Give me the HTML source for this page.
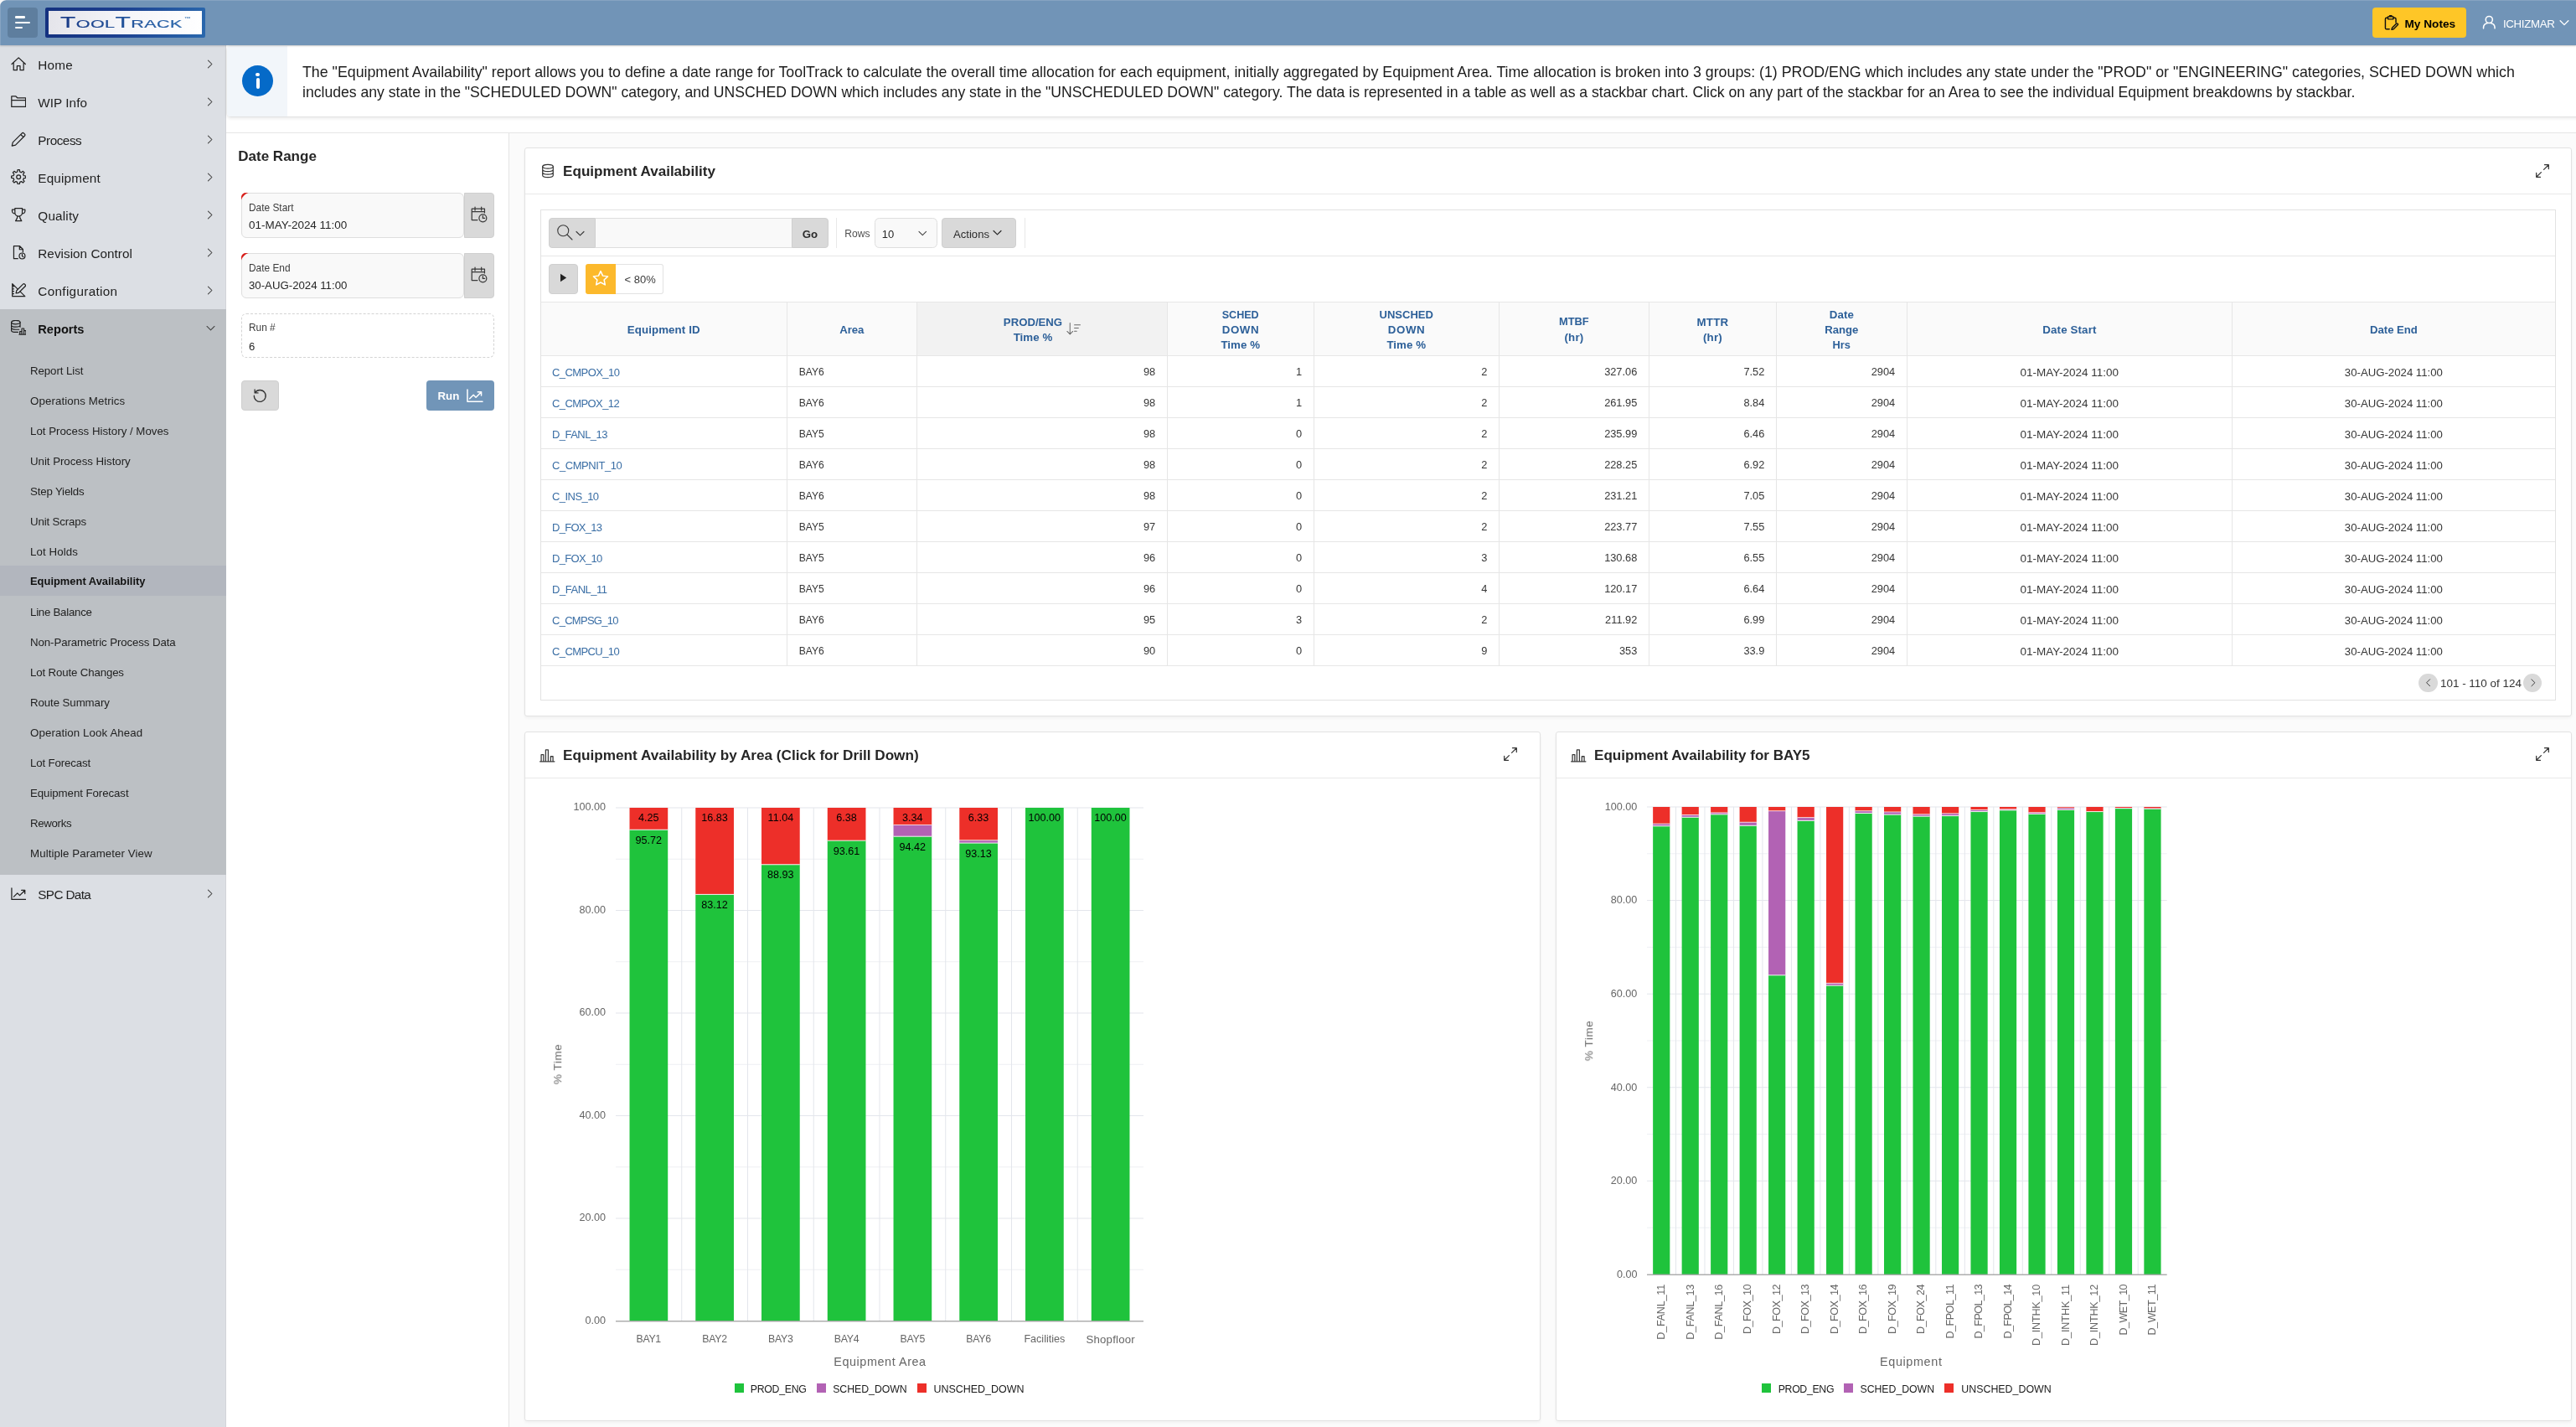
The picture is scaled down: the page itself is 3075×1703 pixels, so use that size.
<!DOCTYPE html>
<html lang="en"><head><meta charset="utf-8">
<title>Equipment Availability - ToolTrack</title>
<style>
html,body{margin:0;padding:0;}
body{width:3075px;height:1703px;overflow:hidden;position:relative;background:#fbfbfb;
 font-family:"Liberation Sans",sans-serif;-webkit-font-smoothing:antialiased;}
#w{position:absolute;left:0;top:0;width:3075px;height:1703px;overflow:hidden;will-change:transform;opacity:.9999;}
.b{position:absolute;display:block;}
.t{position:absolute;white-space:nowrap;line-height:1;display:block;}
.logo{font-size:12.6px;line-height:22px;height:22px;letter-spacing:.25px;transform:scaleX(1.71);transform-origin:0 50%;
 background:linear-gradient(90deg,#1a3a86,#2a69ad);-webkit-background-clip:text;background-clip:text;color:transparent;-webkit-text-stroke:.12px rgba(32,78,152,.8);}
.logo .L{font-size:17.5px;}
.logo .tm{font-size:6px;position:relative;top:-6.5px;letter-spacing:0;}
</style></head>
<body>
<div id="w">
<div class="b" style="left:0px;top:54px;width:270px;height:1649px;background:#dcdfe4;border-right:1px solid #d2d4d8;box-sizing:border-box;"></div>
<svg class="b" style="left:13.1px;top:66.5px;" width="18.4" height="18.4" viewBox="0 0 16 16"><g fill="none" stroke="#222" stroke-width="1.08" stroke-linecap="round" stroke-linejoin="round"><path d="M.9 8.3 8 1.6l7.1 6.7M2.8 6.9v7.6h3.6v-4.3h3.2v4.3h3.6V6.9"/></g></svg>
<span class="t" style="left:45.3px;top:70.03px;font-size:15.3px;color:#1f1f1f;letter-spacing:0.2px;">Home</span>
<svg class="b" style="left:244px;top:69.5px;" width="13" height="13" viewBox="0 0 16 16"><g fill="none" stroke="#444" stroke-width="1.3" stroke-linecap="round" stroke-linejoin="round"><path d="M5.500 2.500 11 8l-5.500 5.500"/></g></svg>
<svg class="b" style="left:13.1px;top:111.5px;" width="18.4" height="18.4" viewBox="0 0 16 16"><g fill="none" stroke="#222" stroke-width="1.08" stroke-linecap="round" stroke-linejoin="round"><path d="M.7 13.4V2.6h4.5l1.7 1.7h8.4v9.1zM.7 6.6h14.6"/></g></svg>
<span class="t" style="left:45.3px;top:115.03px;font-size:15.3px;color:#1f1f1f;letter-spacing:0.04px;">WIP Info</span>
<svg class="b" style="left:244px;top:114.5px;" width="13" height="13" viewBox="0 0 16 16"><g fill="none" stroke="#444" stroke-width="1.3" stroke-linecap="round" stroke-linejoin="round"><path d="M5.500 2.500 11 8l-5.500 5.500"/></g></svg>
<svg class="b" style="left:13.1px;top:156.5px;" width="18.4" height="18.4" viewBox="0 0 16 16"><g fill="none" stroke="#222" stroke-width="1.08" stroke-linecap="round" stroke-linejoin="round"><path d="M1.1 14.9l.9-3.7L11.4 1.8a1.5 1.5 0 0 1 2.1 0l.7.7a1.5 1.5 0 0 1 0 2.1L4.8 14zM10.2 3l2.8 2.8"/></g></svg>
<span class="t" style="left:45.3px;top:160.03px;font-size:15.3px;color:#1f1f1f;letter-spacing:-0.47px;">Process</span>
<svg class="b" style="left:244px;top:159.5px;" width="13" height="13" viewBox="0 0 16 16"><g fill="none" stroke="#444" stroke-width="1.3" stroke-linecap="round" stroke-linejoin="round"><path d="M5.500 2.500 11 8l-5.500 5.500"/></g></svg>
<svg class="b" style="left:13.1px;top:201.5px;" width="18.4" height="18.4" viewBox="0 0 16 16"><g fill="none" stroke="#222" stroke-width="1.08" stroke-linecap="round" stroke-linejoin="round"><path d="M6.72 2.65 L7.00 0.57 L9.00 0.57 L9.28 2.65 L10.87 3.31 L12.55 2.04 L13.96 3.45 L12.69 5.13 L13.35 6.72 L15.43 7.00 L15.43 9.00 L13.35 9.28 L12.69 10.87 L13.96 12.55 L12.55 13.96 L10.87 12.69 L9.28 13.35 L9.00 15.43 L7.00 15.43 L6.72 13.35 L5.13 12.69 L3.45 13.96 L2.04 12.55 L3.31 10.87 L2.65 9.28 L0.57 9.00 L0.57 7.00 L2.65 6.72 L3.31 5.13 L2.04 3.45 L3.45 2.04 L5.13 3.31Z"/><circle cx="8" cy="8" r="2.1"/></g></svg>
<span class="t" style="left:45.3px;top:205.03px;font-size:15.3px;color:#1f1f1f;letter-spacing:0.17px;">Equipment</span>
<svg class="b" style="left:244px;top:204.5px;" width="13" height="13" viewBox="0 0 16 16"><g fill="none" stroke="#444" stroke-width="1.3" stroke-linecap="round" stroke-linejoin="round"><path d="M5.500 2.500 11 8l-5.500 5.500"/></g></svg>
<svg class="b" style="left:13.1px;top:246.5px;" width="18.4" height="18.4" viewBox="0 0 16 16"><g fill="none" stroke="#222" stroke-width="1.08" stroke-linecap="round" stroke-linejoin="round"><path d="M4.2 1.5h7.6v4.3a3.8 3.8 0 0 1-7.6 0zM4.2 2.8H1.3v1.4a2.7 2.7 0 0 0 2.9 2.7M11.8 2.8h2.9v1.4a2.7 2.7 0 0 1-2.9 2.7M6.9 9.4c0 2.2-.9 3.6-2 5.1h6.2c-1.1-1.5-2-2.900-2-5.1"/></g></svg>
<span class="t" style="left:45.3px;top:250.03px;font-size:15.3px;color:#1f1f1f;letter-spacing:0.18px;">Quality</span>
<svg class="b" style="left:244px;top:249.5px;" width="13" height="13" viewBox="0 0 16 16"><g fill="none" stroke="#444" stroke-width="1.3" stroke-linecap="round" stroke-linejoin="round"><path d="M5.500 2.500 11 8l-5.500 5.500"/></g></svg>
<svg class="b" style="left:13.1px;top:291.5px;" width="18.4" height="18.4" viewBox="0 0 16 16"><g fill="none" stroke="#222" stroke-width="1.08" stroke-linecap="round" stroke-linejoin="round"><path d="M7.2 14.5H3V1.500h6.200l3.300 3.300v2.900M9 1.700v3.300h3.300"/><circle cx="11.700" cy="11.700" r="3"/><path d="M11.700 10v1.800l1.200.9"/></g></svg>
<span class="t" style="left:45.3px;top:295.03px;font-size:15.3px;color:#1f1f1f;letter-spacing:0.02px;">Revision Control</span>
<svg class="b" style="left:244px;top:294.5px;" width="13" height="13" viewBox="0 0 16 16"><g fill="none" stroke="#444" stroke-width="1.3" stroke-linecap="round" stroke-linejoin="round"><path d="M5.500 2.500 11 8l-5.500 5.500"/></g></svg>
<svg class="b" style="left:13.1px;top:336.5px;" width="18.4" height="18.4" viewBox="0 0 16 16"><g fill="none" stroke="#222" stroke-width="1.08" stroke-linecap="round" stroke-linejoin="round"><path d="M1.500 1.400v13.100h13.100zM1.500 4.300h1.500M1.500 6.800h1.500M1.500 9.300h1.500M1.500 11.800h1.500"/><path fill="#dcdfe4" d="M5.300 11.200l.7-2.700 6.600-6.600a1.300 1.300 0 0 1 1.800 0l.4.400a1.300 1.300 0 0 1 0 1.800L8.200 10.700z"/></g></svg>
<span class="t" style="left:45.3px;top:340.03px;font-size:15.3px;color:#1f1f1f;letter-spacing:0.32px;">Configuration</span>
<svg class="b" style="left:244px;top:339.5px;" width="13" height="13" viewBox="0 0 16 16"><g fill="none" stroke="#444" stroke-width="1.3" stroke-linecap="round" stroke-linejoin="round"><path d="M5.500 2.500 11 8l-5.500 5.500"/></g></svg>
<div class="b" style="left:0px;top:369px;width:270px;height:675px;background:#bcc0c4;"></div>
<svg class="b" style="left:13.3px;top:381.9px;" width="18.2" height="18.2" viewBox="0 0 16 16"><g fill="none" stroke="#222" stroke-width="1.08" stroke-linecap="round" stroke-linejoin="round"><ellipse cx="5.1" cy="2.3" rx="4.6" ry="1.9"/><path d="M.5 2.3v8.5c0 1.050 2.050 1.900 4.600 1.900h2.300M9.700 2.300v4.900M.5 5.200c0 1.050 2.050 1.900 4.600 1.900s4.600-.85 4.600-1.900M.5 8c0 1.050 2.050 1.900 4.600 1.900h3.400M8.700 15h7M9.400 15v-3h2.100M11.500 15V8.800h2.200V15M13.700 15v-3.900h2.100V15"/></g></svg>
<span class="t" style="left:45.3px;top:385.56px;font-size:14.61px;color:#111;font-weight:700;">Reports</span>
<svg class="b" style="left:245px;top:385px;" width="13" height="13" viewBox="0 0 16 16"><g fill="none" stroke="#444" stroke-width="1.3" stroke-linecap="round" stroke-linejoin="round"><path d="M2.500 5.500 8 11l5.500-5.500"/></g></svg>
<span class="t" style="left:36px;top:435.8px;font-size:13.3px;color:#1f1f1f;letter-spacing:-0.09px;">Report List</span>
<span class="t" style="left:36px;top:471.8px;font-size:13.3px;color:#1f1f1f;letter-spacing:0.09px;">Operations Metrics</span>
<span class="t" style="left:36px;top:507.8px;font-size:13.3px;color:#1f1f1f;letter-spacing:-0px;">Lot Process History / Moves</span>
<span class="t" style="left:36px;top:543.8px;font-size:13.3px;color:#1f1f1f;letter-spacing:-0.04px;">Unit Process History</span>
<span class="t" style="left:36px;top:579.8px;font-size:13.3px;color:#1f1f1f;letter-spacing:-0.18px;">Step Yields</span>
<span class="t" style="left:36px;top:615.8px;font-size:13.3px;color:#1f1f1f;letter-spacing:-0.15px;">Unit Scraps</span>
<span class="t" style="left:36px;top:651.8px;font-size:13.3px;color:#1f1f1f;letter-spacing:0.09px;">Lot Holds</span>
<div class="b" style="left:0px;top:674.9px;width:270px;height:36px;background:#b2b6be;"></div>
<span class="t" style="left:36px;top:687.99px;font-size:12.91px;color:#111;font-weight:700;">Equipment Availability</span>
<span class="t" style="left:36px;top:723.8px;font-size:13.3px;color:#1f1f1f;letter-spacing:-0.27px;">Line Balance</span>
<span class="t" style="left:36px;top:759.8px;font-size:13.3px;color:#1f1f1f;letter-spacing:-0.11px;">Non-Parametric Process Data</span>
<span class="t" style="left:36px;top:795.8px;font-size:13.3px;color:#1f1f1f;letter-spacing:-0.16px;">Lot Route Changes</span>
<span class="t" style="left:36px;top:831.8px;font-size:13.3px;color:#1f1f1f;letter-spacing:-0.1px;">Route Summary</span>
<span class="t" style="left:36px;top:867.8px;font-size:13.3px;color:#1f1f1f;letter-spacing:0.1px;">Operation Look Ahead</span>
<span class="t" style="left:36px;top:903.8px;font-size:13.3px;color:#1f1f1f;letter-spacing:-0.16px;">Lot Forecast</span>
<span class="t" style="left:36px;top:939.8px;font-size:13.3px;color:#1f1f1f;letter-spacing:-0.08px;">Equipment Forecast</span>
<span class="t" style="left:36px;top:975.8px;font-size:13.3px;color:#1f1f1f;letter-spacing:-0.35px;">Reworks</span>
<span class="t" style="left:36px;top:1011.8px;font-size:13.3px;color:#1f1f1f;letter-spacing:0.08px;">Multiple Parameter View</span>
<svg class="b" style="left:12.8px;top:1056.7px;" width="18.6" height="18.6" viewBox="0 0 16 16"><g fill="none" stroke="#222" stroke-width="1.08" stroke-linecap="round" stroke-linejoin="round"><path d="M.800 2.500v11.600h14.800M3 11.300l3.700-3.700 2.400 2.400 5.300-5.300M10.900 4.700h3.500v3.500"/></g></svg>
<span class="t" style="left:45.3px;top:1060.23px;font-size:15.3px;color:#1f1f1f;letter-spacing:-0.65px;">SPC Data</span>
<svg class="b" style="left:244px;top:1059.5px;" width="13" height="13" viewBox="0 0 16 16"><g fill="none" stroke="#444" stroke-width="1.3" stroke-linecap="round" stroke-linejoin="round"><path d="M5.500 2.500 11 8l-5.500 5.500"/></g></svg>
<div class="b" style="left:270px;top:54px;width:2805px;height:104px;background:#fff;border-bottom:1px solid #e6e6e6;"></div>
<div class="b" style="left:270.5px;top:54.5px;width:2810px;height:84.5px;background:#fff;border-radius:4px;box-shadow:0 2px 4px rgba(0,0,0,.10),0 0 0 1px rgba(0,0,0,.04);"></div>
<div class="b" style="left:270.5px;top:54.5px;width:72.5px;height:84.5px;background:#f2f6fa;border-radius:4px 0 0 4px;"></div>
<div class="b" style="left:289px;top:78.2px;width:37px;height:37px;background:#056ac8;border-radius:50%;"></div>
<div class="b" style="left:305.3px;top:86.6px;width:4.4px;height:4.4px;background:#fff;border-radius:50%;"></div>
<div class="b" style="left:305.5px;top:93.3px;width:4px;height:12.3px;background:#fff;border-radius:2px;"></div>
<span class="t" style="left:361px;top:77.61px;font-size:17.79px;color:#1c1c1c;">The "Equipment Availability" report allows you to define a date range for ToolTrack to calculate the overall time allocation for each equipment, initially aggregated by Equipment Area. Time allocation is broken into 3 groups: (1) PROD/ENG which includes any state under the "PROD" or "ENGINEERING" categories, SCHED DOWN which</span>
<span class="t" style="left:361px;top:101.9px;font-size:17.61px;color:#1c1c1c;">includes any state in the "SCHEDULED DOWN" category, and UNSCHED DOWN which includes any state in the "UNSCHEDULED DOWN" category. The data is represented in a table as well as a stackbar chart. Click on any part of the stackbar for an Area to see the individual Equipment breakdowns by stackbar.</span>
<div class="b" style="left:270px;top:159px;width:337.5px;height:1544px;background:#fff;border-right:1px solid #e4e4e4;box-sizing:border-box;"></div>
<span class="t" style="left:284.2px;top:177.87px;font-size:17.05px;color:#262626;font-weight:700;">Date Range</span>
<div class="b" style="left:288px;top:230px;width:266px;height:54px;background:#f9f9f9;border:1px solid #dedede;border-radius:6px;box-sizing:border-box;"></div>
<svg class="b" style="left:288px;top:230px" width="9" height="9" viewBox="0 0 9 9"><path d="M0 8.500V4.500A6 6 0 0 1 6 0H8.500Q2.500 2 0 8.500z" fill="#d9201c"/></svg>
<div class="b" style="left:554px;top:230px;width:36px;height:54px;background:#d9d9d9;border:1px solid #cfcfcf;border-radius:0 4px 4px 0;box-sizing:border-box;"></div>
<svg class="b" style="left:560.5px;top:245.3px;" width="21" height="21" viewBox="0 0 16 16"><g fill="none" stroke="#3a3a3a" stroke-width="0.95" stroke-linecap="round" stroke-linejoin="round"><path d="M6.800 13.400H1.700V3.200h11.600v3.600M1.700 5.800h11.600M4.600 1.600v3M10.400 1.600v3"/><circle cx="11.700" cy="11.700" r="3.400"/><path d="M11.700 9.700v2.100h1.700"/></g></svg>
<span class="t" style="left:297px;top:243.19px;font-size:11.9px;color:#3c3c3c;">Date Start</span>
<span class="t" style="left:297px;top:262.12px;font-size:13.47px;color:#262626;">01-MAY-2024 11:00</span>
<div class="b" style="left:288px;top:302px;width:266px;height:54px;background:#f9f9f9;border:1px solid #dedede;border-radius:6px;box-sizing:border-box;"></div>
<svg class="b" style="left:288px;top:302px" width="9" height="9" viewBox="0 0 9 9"><path d="M0 8.500V4.500A6 6 0 0 1 6 0H8.500Q2.500 2 0 8.500z" fill="#d9201c"/></svg>
<div class="b" style="left:554px;top:302px;width:36px;height:54px;background:#d9d9d9;border:1px solid #cfcfcf;border-radius:0 4px 4px 0;box-sizing:border-box;"></div>
<svg class="b" style="left:560.5px;top:317.3px;" width="21" height="21" viewBox="0 0 16 16"><g fill="none" stroke="#3a3a3a" stroke-width="0.95" stroke-linecap="round" stroke-linejoin="round"><path d="M6.800 13.400H1.700V3.200h11.600v3.600M1.700 5.800h11.600M4.600 1.600v3M10.400 1.600v3"/><circle cx="11.700" cy="11.700" r="3.400"/><path d="M11.700 9.700v2.100h1.700"/></g></svg>
<span class="t" style="left:297px;top:315.19px;font-size:11.9px;color:#3c3c3c;">Date End</span>
<span class="t" style="left:297px;top:334.24px;font-size:13.22px;color:#262626;">30-AUG-2024 11:00</span>
<div class="b" style="left:288px;top:374px;width:302px;height:52.5px;background:#fff;border:1px dashed #d4d4d4;border-radius:6px;box-sizing:border-box;"></div>
<span class="t" style="left:297px;top:386.39px;font-size:11.9px;color:#3c3c3c;">Run #</span>
<span class="t" style="left:297px;top:407.1px;font-size:13.1px;color:#262626;">6</span>
<div class="b" style="left:288px;top:454px;width:44.5px;height:36px;background:#d9d9d9;border:1px solid #cfcfcf;border-radius:4px;box-sizing:border-box;"></div>
<svg class="b" style="left:301px;top:463px;" width="18.5" height="18.5" viewBox="0 0 16 16"><g fill="none" stroke="#333" stroke-width="1.1" stroke-linecap="round" stroke-linejoin="round"><path d="M3.100 4.700A6 6 0 1 1 2 8M2.700 1.700v3.400h3.400"/></g></svg>
<div class="b" style="left:509px;top:454px;width:81px;height:36px;background:#7195b8;border-radius:4px;"></div>
<span class="t" style="left:522.5px;top:466.3px;font-size:13.3px;color:#fff;font-weight:700;">Run</span>
<svg class="b" style="left:557.3px;top:462px;" width="19.5" height="19.5" viewBox="0 0 16 16"><g fill="none" stroke="#fff" stroke-width="1.25" stroke-linecap="round" stroke-linejoin="round"><path d="M.800 2.500v11.600h14.800M3 11.300l3.700-3.700 2.400 2.400 5.300-5.300M10.900 4.700h3.500v3.500"/></g></svg>
<div class="b" style="left:626px;top:176px;width:2444px;height:678.8px;background:#fff;border:1px solid #e2e2e2;border-radius:3px;box-sizing:border-box;box-shadow:0 2px 4px rgba(0,0,0,.05);"></div>
<div class="b" style="left:627px;top:230.7px;width:2442px;height:1px;background:#e8e8e8;"></div>
<svg class="b" style="left:644.5px;top:194.8px;" width="18" height="18" viewBox="0 0 16 16"><g fill="none" stroke="#333" stroke-width="1.05" stroke-linecap="round" stroke-linejoin="round"><ellipse cx="8" cy="3.400" rx="5.600" ry="2.100"/><path d="M2.400 3.400v9.200c0 1.200 2.500 2.100 5.600 2.100s5.600-.9 5.600-2.100V3.400M2.400 6.500c0 1.200 2.500 2.100 5.600 2.100s5.600-.9 5.600-2.100M2.400 9.600c0 1.200 2.500 2.100 5.600 2.100s5.600-.9 5.600-2.100"/></g></svg>
<span class="t" style="left:672.1px;top:196.45px;font-size:17.09px;color:#262626;font-weight:700;">Equipment Availability</span>
<svg class="b" style="left:3025.5px;top:194.5px;" width="18" height="18" viewBox="0 0 16 16"><g fill="none" stroke="#333" stroke-width="1.1" stroke-linecap="round" stroke-linejoin="round"><path d="M9.400 6.600 14.500 1.500M10.200 1.500h4.300v4.300M6.600 9.400 1.500 14.500M5.800 14.500H1.500v-4.300"/></g></svg>
<div class="b" style="left:645px;top:250.3px;width:2405.7px;height:585.5px;background:#fff;border:1px solid #e2e2e2;box-sizing:border-box;"></div>
<div class="b" style="left:646px;top:305px;width:2403.7px;height:1px;background:#e6e6e6;"></div>
<div class="b" style="left:655.3px;top:260.2px;width:55.7px;height:35.5px;background:#d9d9d9;border:1px solid #cfcfcf;border-radius:4px 0 0 4px;box-sizing:border-box;"></div>
<svg class="b" style="left:663.5px;top:267px;" width="20" height="20" viewBox="0 0 16 16"><g fill="none" stroke="#3a3a3a" stroke-width="0.9" stroke-linecap="round" stroke-linejoin="round"><circle cx="6.600" cy="6.600" r="5.200"/><path d="M10.400 10.400l4.800 4.800"/></g></svg>
<svg class="b" style="left:685.5px;top:271.7px;" width="13" height="13" viewBox="0 0 16 16"><g fill="none" stroke="#3a3a3a" stroke-width="1.45" stroke-linecap="round" stroke-linejoin="round"><path d="M2.500 5.500 8 11l5.500-5.500"/></g></svg>
<div class="b" style="left:711px;top:260.2px;width:234px;height:35.5px;background:#f9f9f9;border-top:1px solid #dedede;border-bottom:1px solid #dedede;box-sizing:border-box;"></div>
<div class="b" style="left:945px;top:260.2px;width:43.7px;height:35.5px;background:#d9d9d9;border:1px solid #cfcfcf;border-radius:0 4px 4px 0;box-sizing:border-box;"></div>
<span class="t" style="left:957.63px;top:272.75px;font-size:13.2px;color:#2b2b2b;font-weight:700;">Go</span>
<div class="b" style="left:998px;top:260px;width:1px;height:36px;background:#e8e8e8;"></div>
<span class="t" style="left:1008.3px;top:273.48px;font-size:12.12px;color:#505050;">Rows</span>
<div class="b" style="left:1044.3px;top:260.2px;width:75.2px;height:35.5px;background:#f9f9f9;border:1px solid #dedede;border-radius:5.500px;box-sizing:border-box;"></div>
<span class="t" style="left:1052.8px;top:273.05px;font-size:13px;color:#262626;">10</span>
<svg class="b" style="left:1094.8px;top:272px;" width="12.5" height="12.5" viewBox="0 0 16 16"><g fill="none" stroke="#444" stroke-width="1.35" stroke-linecap="round" stroke-linejoin="round"><path d="M2.500 5.500 8 11l5.500-5.500"/></g></svg>
<div class="b" style="left:1124.3px;top:260.2px;width:88.5px;height:35.5px;background:#d9d9d9;border:1px solid #cfcfcf;border-radius:4px;box-sizing:border-box;"></div>
<span class="t" style="left:1138px;top:272.99px;font-size:13.11px;color:#2b2b2b;">Actions</span>
<svg class="b" style="left:1184.3px;top:271px;" width="13" height="13" viewBox="0 0 16 16"><g fill="none" stroke="#2b2b2b" stroke-width="1.5" stroke-linecap="round" stroke-linejoin="round"><path d="M2.500 5.500 8 11l5.500-5.500"/></g></svg>
<div class="b" style="left:1222.5px;top:260px;width:1px;height:36px;background:#e8e8e8;"></div>
<div class="b" style="left:655.3px;top:315.3px;width:34.5px;height:35.5px;background:#d9d9d9;border:1px solid #cfcfcf;border-radius:4px;box-sizing:border-box;"></div>
<svg class="b" style="left:668.300px;top:326.300px" width="9" height="11" viewBox="0 0 9 11"><path d="M1 .8 8.200 5.500 1 10.200z" fill="#222"/></svg>
<div class="b" style="left:699px;top:315.3px;width:36px;height:35.5px;background:#fcb92c;border-radius:3px 0 0 3px;"></div>
<svg class="b" style="left:707.2px;top:322.3px;" width="20" height="20" viewBox="0 0 16 16"><g fill="none" stroke="#fff" stroke-width="1.2" stroke-linecap="round" stroke-linejoin="round"><path d="M8 1.300l2.050 4.400 4.800.6-3.550 3.300.95 4.750L8 12l-4.250 2.350.95-4.750L1.150 6.300l4.800-.6z"/></g></svg>
<div class="b" style="left:735px;top:315.3px;width:56.5px;height:35.5px;background:#fff;border:1px solid #e2e2e2;border-left:none;border-radius:0 3px 3px 0;box-sizing:border-box;"></div>
<span class="t" style="left:745.5px;top:327.25px;font-size:12.99px;color:#3a3a3a;">&lt; 80%</span>
<div class="b" style="left:646px;top:360.1px;width:2404.1px;height:64.6px;background:#fafafa;border-top:1px solid #e6e6e6;border-bottom:1px solid #e6e6e6;box-sizing:border-box;"></div>
<div class="b" style="left:1094.3px;top:361.1px;width:298.9px;height:62.6px;background:#f2f2f2;"></div>
<div class="b" style="left:938.8px;top:360.1px;width:1px;height:434.6px;background:#e6e6e6;"></div>
<div class="b" style="left:1093.8px;top:360.1px;width:1px;height:434.6px;background:#e6e6e6;"></div>
<div class="b" style="left:1392.7px;top:360.1px;width:1px;height:434.6px;background:#e6e6e6;"></div>
<div class="b" style="left:1567.7px;top:360.1px;width:1px;height:434.6px;background:#e6e6e6;"></div>
<div class="b" style="left:1788.8px;top:360.1px;width:1px;height:434.6px;background:#e6e6e6;"></div>
<div class="b" style="left:1967.8px;top:360.1px;width:1px;height:434.6px;background:#e6e6e6;"></div>
<div class="b" style="left:2119.8px;top:360.1px;width:1px;height:434.6px;background:#e6e6e6;"></div>
<div class="b" style="left:2275.7px;top:360.1px;width:1px;height:434.6px;background:#e6e6e6;"></div>
<div class="b" style="left:2664px;top:360.1px;width:1px;height:434.6px;background:#e6e6e6;"></div>
<div class="b" style="left:646px;top:460.7px;width:2404.4px;height:1px;background:#e6e6e6;"></div>
<div class="b" style="left:646px;top:497.7px;width:2404.4px;height:1px;background:#e6e6e6;"></div>
<div class="b" style="left:646px;top:534.7px;width:2404.4px;height:1px;background:#e6e6e6;"></div>
<div class="b" style="left:646px;top:571.7px;width:2404.4px;height:1px;background:#e6e6e6;"></div>
<div class="b" style="left:646px;top:608.7px;width:2404.4px;height:1px;background:#e6e6e6;"></div>
<div class="b" style="left:646px;top:645.7px;width:2404.4px;height:1px;background:#e6e6e6;"></div>
<div class="b" style="left:646px;top:682.7px;width:2404.4px;height:1px;background:#e6e6e6;"></div>
<div class="b" style="left:646px;top:719.7px;width:2404.4px;height:1px;background:#e6e6e6;"></div>
<div class="b" style="left:646px;top:756.7px;width:2404.4px;height:1px;background:#e6e6e6;"></div>
<div class="b" style="left:646px;top:793.7px;width:2404.4px;height:1px;background:#e6e6e6;"></div>
<span class="t" style="left:748.7px;top:387.3px;font-size:13.3px;color:#2d6099;font-weight:700;letter-spacing:0.11px;">Equipment ID</span>
<span class="t" style="left:1002.15px;top:387.36px;font-size:13.18px;color:#2d6099;font-weight:700;">Area</span>
<span class="t" style="left:1197.85px;top:378.31px;font-size:13.18px;color:#2d6099;font-weight:700;">PROD/ENG</span>
<span class="t" style="left:1209.68px;top:396.35px;font-size:13.3px;color:#2d6099;font-weight:700;letter-spacing:0.06px;">Time %</span>
<svg class="b" style="left:1272.5px;top:383.5px;" width="17" height="17" viewBox="0 0 16 16"><g fill="none" stroke="#6a6a6a" stroke-width="0.95" stroke-linecap="round" stroke-linejoin="round"><path d="M4 1.500v12.500M.8 10.800 4 14l3.200-3.200M9 3.500h6.500M9 7h4.500M9 10.500h2.500"/></g></svg>
<span class="t" style="left:1458.7px;top:369.56px;font-size:12.57px;color:#2d6099;font-weight:700;">SCHED</span>
<span class="t" style="left:1458.82px;top:387.3px;font-size:13.3px;color:#2d6099;font-weight:700;letter-spacing:0.55px;">DOWN</span>
<span class="t" style="left:1457.38px;top:405.4px;font-size:13.3px;color:#2d6099;font-weight:700;letter-spacing:0.06px;">Time %</span>
<span class="t" style="left:1646.6px;top:369.35px;font-size:13px;color:#2d6099;font-weight:700;">UNSCHED</span>
<span class="t" style="left:1656.87px;top:387.3px;font-size:13.3px;color:#2d6099;font-weight:700;letter-spacing:0.55px;">DOWN</span>
<span class="t" style="left:1655.43px;top:405.4px;font-size:13.3px;color:#2d6099;font-weight:700;letter-spacing:0.06px;">Time %</span>
<span class="t" style="left:1860.95px;top:378.47px;font-size:12.86px;color:#2d6099;font-weight:700;">MTBF</span>
<span class="t" style="left:1867.41px;top:396.35px;font-size:13.3px;color:#2d6099;font-weight:700;letter-spacing:0.21px;">(hr)</span>
<span class="t" style="left:2025.43px;top:378.25px;font-size:13.3px;color:#2d6099;font-weight:700;letter-spacing:0.27px;">MTTR</span>
<span class="t" style="left:2032.91px;top:396.35px;font-size:13.3px;color:#2d6099;font-weight:700;letter-spacing:0.21px;">(hr)</span>
<span class="t" style="left:2183.66px;top:369.2px;font-size:13.3px;color:#2d6099;font-weight:700;letter-spacing:0.12px;">Date</span>
<span class="t" style="left:2178.15px;top:387.37px;font-size:13.15px;color:#2d6099;font-weight:700;">Range</span>
<span class="t" style="left:2187.55px;top:405.63px;font-size:12.83px;color:#2d6099;font-weight:700;">Hrs</span>
<span class="t" style="left:2438.32px;top:387.3px;font-size:13.3px;color:#2d6099;font-weight:700;letter-spacing:0.14px;">Date Start</span>
<span class="t" style="left:2829.05px;top:387.4px;font-size:13.11px;color:#2d6099;font-weight:700;">Date End</span>
<span class="t" style="left:659px;top:437.65px;font-size:13px;color:#3a6ea5;letter-spacing:-0.56px;">C_CMPOX_10</span>
<span class="t" style="left:953.8px;top:438.4px;font-size:12.08px;color:#363636;">BAY6</span>
<span class="t" style="left:1364.96px;top:438.05px;font-size:12.8px;color:#363636;">98</span>
<span class="t" style="left:1547.08px;top:438.05px;font-size:12.8px;color:#363636;">1</span>
<span class="t" style="left:1768.18px;top:438.05px;font-size:12.8px;color:#363636;">2</span>
<span class="t" style="left:1915.15px;top:438.05px;font-size:12.8px;color:#363636;">327.06</span>
<span class="t" style="left:2081.39px;top:438.05px;font-size:12.8px;color:#363636;">7.52</span>
<span class="t" style="left:2233.72px;top:438.05px;font-size:12.8px;color:#363636;">2904</span>
<span class="t" style="left:2411.6px;top:437.71px;font-size:13.49px;color:#363636;">01-MAY-2024 11:00</span>
<span class="t" style="left:2798.85px;top:437.85px;font-size:13.2px;color:#363636;">30-AUG-2024 11:00</span>
<span class="t" style="left:659px;top:474.65px;font-size:13px;color:#3a6ea5;letter-spacing:-0.59px;">C_CMPOX_12</span>
<span class="t" style="left:953.8px;top:475.4px;font-size:12.08px;color:#363636;">BAY6</span>
<span class="t" style="left:1364.96px;top:475.05px;font-size:12.8px;color:#363636;">98</span>
<span class="t" style="left:1547.08px;top:475.05px;font-size:12.8px;color:#363636;">1</span>
<span class="t" style="left:1768.18px;top:475.05px;font-size:12.8px;color:#363636;">2</span>
<span class="t" style="left:1915.15px;top:475.05px;font-size:12.8px;color:#363636;">261.95</span>
<span class="t" style="left:2081.39px;top:475.05px;font-size:12.8px;color:#363636;">8.84</span>
<span class="t" style="left:2233.72px;top:475.05px;font-size:12.8px;color:#363636;">2904</span>
<span class="t" style="left:2411.6px;top:474.71px;font-size:13.49px;color:#363636;">01-MAY-2024 11:00</span>
<span class="t" style="left:2798.85px;top:474.85px;font-size:13.2px;color:#363636;">30-AUG-2024 11:00</span>
<span class="t" style="left:659px;top:511.65px;font-size:13px;color:#3a6ea5;letter-spacing:-0.55px;">D_FANL_13</span>
<span class="t" style="left:953.8px;top:512.4px;font-size:12.08px;color:#363636;">BAY5</span>
<span class="t" style="left:1364.96px;top:512.05px;font-size:12.8px;color:#363636;">98</span>
<span class="t" style="left:1547.08px;top:512.05px;font-size:12.8px;color:#363636;">0</span>
<span class="t" style="left:1768.18px;top:512.05px;font-size:12.8px;color:#363636;">2</span>
<span class="t" style="left:1915.15px;top:512.05px;font-size:12.8px;color:#363636;">235.99</span>
<span class="t" style="left:2081.39px;top:512.05px;font-size:12.8px;color:#363636;">6.46</span>
<span class="t" style="left:2233.72px;top:512.05px;font-size:12.8px;color:#363636;">2904</span>
<span class="t" style="left:2411.6px;top:511.71px;font-size:13.49px;color:#363636;">01-MAY-2024 11:00</span>
<span class="t" style="left:2798.85px;top:511.85px;font-size:13.2px;color:#363636;">30-AUG-2024 11:00</span>
<span class="t" style="left:659px;top:548.65px;font-size:13px;color:#3a6ea5;letter-spacing:-0.44px;">C_CMPNIT_10</span>
<span class="t" style="left:953.8px;top:549.4px;font-size:12.08px;color:#363636;">BAY6</span>
<span class="t" style="left:1364.96px;top:549.05px;font-size:12.8px;color:#363636;">98</span>
<span class="t" style="left:1547.08px;top:549.05px;font-size:12.8px;color:#363636;">0</span>
<span class="t" style="left:1768.18px;top:549.05px;font-size:12.8px;color:#363636;">2</span>
<span class="t" style="left:1915.15px;top:549.05px;font-size:12.8px;color:#363636;">228.25</span>
<span class="t" style="left:2081.39px;top:549.05px;font-size:12.8px;color:#363636;">6.92</span>
<span class="t" style="left:2233.72px;top:549.05px;font-size:12.8px;color:#363636;">2904</span>
<span class="t" style="left:2411.6px;top:548.71px;font-size:13.49px;color:#363636;">01-MAY-2024 11:00</span>
<span class="t" style="left:2798.85px;top:548.85px;font-size:13.2px;color:#363636;">30-AUG-2024 11:00</span>
<span class="t" style="left:659px;top:585.65px;font-size:13px;color:#3a6ea5;letter-spacing:-0.56px;">C_INS_10</span>
<span class="t" style="left:953.8px;top:586.4px;font-size:12.08px;color:#363636;">BAY6</span>
<span class="t" style="left:1364.96px;top:586.05px;font-size:12.8px;color:#363636;">98</span>
<span class="t" style="left:1547.08px;top:586.05px;font-size:12.8px;color:#363636;">0</span>
<span class="t" style="left:1768.18px;top:586.05px;font-size:12.8px;color:#363636;">2</span>
<span class="t" style="left:1915.15px;top:586.05px;font-size:12.8px;color:#363636;">231.21</span>
<span class="t" style="left:2081.39px;top:586.05px;font-size:12.8px;color:#363636;">7.05</span>
<span class="t" style="left:2233.72px;top:586.05px;font-size:12.8px;color:#363636;">2904</span>
<span class="t" style="left:2411.6px;top:585.71px;font-size:13.49px;color:#363636;">01-MAY-2024 11:00</span>
<span class="t" style="left:2798.85px;top:585.85px;font-size:13.2px;color:#363636;">30-AUG-2024 11:00</span>
<span class="t" style="left:659px;top:622.65px;font-size:13px;color:#3a6ea5;letter-spacing:-0.72px;">D_FOX_13</span>
<span class="t" style="left:953.8px;top:623.4px;font-size:12.08px;color:#363636;">BAY5</span>
<span class="t" style="left:1364.96px;top:623.05px;font-size:12.8px;color:#363636;">97</span>
<span class="t" style="left:1547.08px;top:623.05px;font-size:12.8px;color:#363636;">0</span>
<span class="t" style="left:1768.18px;top:623.05px;font-size:12.8px;color:#363636;">2</span>
<span class="t" style="left:1915.15px;top:623.05px;font-size:12.8px;color:#363636;">223.77</span>
<span class="t" style="left:2081.39px;top:623.05px;font-size:12.8px;color:#363636;">7.55</span>
<span class="t" style="left:2233.72px;top:623.05px;font-size:12.8px;color:#363636;">2904</span>
<span class="t" style="left:2411.6px;top:622.71px;font-size:13.49px;color:#363636;">01-MAY-2024 11:00</span>
<span class="t" style="left:2798.85px;top:622.85px;font-size:13.2px;color:#363636;">30-AUG-2024 11:00</span>
<span class="t" style="left:659px;top:659.65px;font-size:13px;color:#3a6ea5;letter-spacing:-0.68px;">D_FOX_10</span>
<span class="t" style="left:953.8px;top:660.4px;font-size:12.08px;color:#363636;">BAY5</span>
<span class="t" style="left:1364.96px;top:660.05px;font-size:12.8px;color:#363636;">96</span>
<span class="t" style="left:1547.08px;top:660.05px;font-size:12.8px;color:#363636;">0</span>
<span class="t" style="left:1768.18px;top:660.05px;font-size:12.8px;color:#363636;">3</span>
<span class="t" style="left:1915.15px;top:660.05px;font-size:12.8px;color:#363636;">130.68</span>
<span class="t" style="left:2081.39px;top:660.05px;font-size:12.8px;color:#363636;">6.55</span>
<span class="t" style="left:2233.72px;top:660.05px;font-size:12.8px;color:#363636;">2904</span>
<span class="t" style="left:2411.6px;top:659.71px;font-size:13.49px;color:#363636;">01-MAY-2024 11:00</span>
<span class="t" style="left:2798.85px;top:659.85px;font-size:13.2px;color:#363636;">30-AUG-2024 11:00</span>
<span class="t" style="left:659px;top:696.65px;font-size:13px;color:#3a6ea5;letter-spacing:-0.47px;">D_FANL_11</span>
<span class="t" style="left:953.8px;top:697.4px;font-size:12.08px;color:#363636;">BAY5</span>
<span class="t" style="left:1364.96px;top:697.05px;font-size:12.8px;color:#363636;">96</span>
<span class="t" style="left:1547.08px;top:697.05px;font-size:12.8px;color:#363636;">0</span>
<span class="t" style="left:1768.18px;top:697.05px;font-size:12.8px;color:#363636;">4</span>
<span class="t" style="left:1915.15px;top:697.05px;font-size:12.8px;color:#363636;">120.17</span>
<span class="t" style="left:2081.39px;top:697.05px;font-size:12.8px;color:#363636;">6.64</span>
<span class="t" style="left:2233.72px;top:697.05px;font-size:12.8px;color:#363636;">2904</span>
<span class="t" style="left:2411.6px;top:696.71px;font-size:13.49px;color:#363636;">01-MAY-2024 11:00</span>
<span class="t" style="left:2798.85px;top:696.85px;font-size:13.2px;color:#363636;">30-AUG-2024 11:00</span>
<span class="t" style="left:659px;top:733.65px;font-size:13px;color:#3a6ea5;letter-spacing:-0.72px;">C_CMPSG_10</span>
<span class="t" style="left:953.8px;top:734.4px;font-size:12.08px;color:#363636;">BAY6</span>
<span class="t" style="left:1364.96px;top:734.05px;font-size:12.8px;color:#363636;">95</span>
<span class="t" style="left:1547.08px;top:734.05px;font-size:12.8px;color:#363636;">3</span>
<span class="t" style="left:1768.18px;top:734.05px;font-size:12.8px;color:#363636;">2</span>
<span class="t" style="left:1916.1px;top:734.05px;font-size:12.8px;color:#363636;">211.92</span>
<span class="t" style="left:2081.39px;top:734.05px;font-size:12.8px;color:#363636;">6.99</span>
<span class="t" style="left:2233.72px;top:734.05px;font-size:12.8px;color:#363636;">2904</span>
<span class="t" style="left:2411.6px;top:733.71px;font-size:13.49px;color:#363636;">01-MAY-2024 11:00</span>
<span class="t" style="left:2798.85px;top:733.85px;font-size:13.2px;color:#363636;">30-AUG-2024 11:00</span>
<span class="t" style="left:659px;top:770.65px;font-size:13px;color:#3a6ea5;letter-spacing:-0.59px;">C_CMPCU_10</span>
<span class="t" style="left:953.8px;top:771.4px;font-size:12.08px;color:#363636;">BAY6</span>
<span class="t" style="left:1364.96px;top:771.05px;font-size:12.8px;color:#363636;">90</span>
<span class="t" style="left:1547.08px;top:771.05px;font-size:12.8px;color:#363636;">0</span>
<span class="t" style="left:1768.18px;top:771.05px;font-size:12.8px;color:#363636;">9</span>
<span class="t" style="left:1932.94px;top:771.05px;font-size:12.8px;color:#363636;">353</span>
<span class="t" style="left:2081.39px;top:771.05px;font-size:12.8px;color:#363636;">33.9</span>
<span class="t" style="left:2233.72px;top:771.05px;font-size:12.8px;color:#363636;">2904</span>
<span class="t" style="left:2411.6px;top:770.71px;font-size:13.49px;color:#363636;">01-MAY-2024 11:00</span>
<span class="t" style="left:2798.85px;top:770.85px;font-size:13.2px;color:#363636;">30-AUG-2024 11:00</span>
<div class="b" style="left:2887.3px;top:803.7px;width:22.3px;height:22.3px;background:#d9d9d9;border-radius:50%;"></div>
<svg class="b" style="left:2892.5px;top:808.8px;" width="11.5" height="11.5" viewBox="0 0 16 16"><g fill="none" stroke="#333" stroke-width="1.3" stroke-linecap="round" stroke-linejoin="round"><path d="M10.500 2.500 5 8l5.500 5.500"/></g></svg>
<span class="t" style="left:2913px;top:809.23px;font-size:13.45px;color:#333;">101 - 110 of 124</span>
<div class="b" style="left:3012px;top:803.7px;width:22.3px;height:22.3px;background:#d9d9d9;border-radius:50%;"></div>
<svg class="b" style="left:3018px;top:808.8px;" width="11.5" height="11.5" viewBox="0 0 16 16"><g fill="none" stroke="#333" stroke-width="1.3" stroke-linecap="round" stroke-linejoin="round"><path d="M5.500 2.500 11 8l-5.500 5.500"/></g></svg>
<div class="b" style="left:626px;top:872.8px;width:1212.5px;height:823.5px;background:#fff;border:1px solid #e2e2e2;border-radius:3px;box-sizing:border-box;box-shadow:0 2px 4px rgba(0,0,0,.05);"></div>
<div class="b" style="left:627px;top:927.5px;width:1210.5px;height:1px;background:#e8e8e8;"></div>
<svg class="b" style="left:644px;top:892.3px;" width="18.5" height="18.5" viewBox="0 0 16 16"><g fill="none" stroke="#3a3a3a" stroke-width="1.1" stroke-linecap="round" stroke-linejoin="round"><path d="M.5 14.500h15M1.800 14.500V7.500h2.400v7M6.400 14.500V2.500h2.600v12M11.500 14.500V9.300h2.400v5.200M4.200 14.500h2.200M9 14.500h2.500"/></g></svg>
<span class="t" style="left:672.1px;top:893.21px;font-size:17.18px;color:#262626;font-weight:700;">Equipment Availability by Area (Click for Drill Down)</span>
<svg class="b" style="left:1794px;top:891.3px;" width="18" height="18" viewBox="0 0 16 16"><g fill="none" stroke="#333" stroke-width="1.1" stroke-linecap="round" stroke-linejoin="round"><path d="M9.400 6.600 14.500 1.500M10.200 1.500h4.300v4.300M6.600 9.400 1.500 14.500M5.800 14.500H1.500v-4.300"/></g></svg>
<svg class="b" style="left:734px;top:961.5px" width="632" height="617.5"><rect x="1" y="552.75" width="630.00" height="1" fill="#eef0f4"/><rect x="1" y="491.50" width="630.00" height="1" fill="#e3e6ec"/><rect x="1" y="430.25" width="630.00" height="1" fill="#eef0f4"/><rect x="1" y="369.00" width="630.00" height="1" fill="#e3e6ec"/><rect x="1" y="307.75" width="630.00" height="1" fill="#eef0f4"/><rect x="1" y="246.50" width="630.00" height="1" fill="#e3e6ec"/><rect x="1" y="185.25" width="630.00" height="1" fill="#eef0f4"/><rect x="1" y="124.00" width="630.00" height="1" fill="#e3e6ec"/><rect x="1" y="62.75" width="630.00" height="1" fill="#eef0f4"/><rect x="1" y="1.50" width="630.00" height="1" fill="#e3e6ec"/><rect x="79.25" y="2" width="1" height="612.50" fill="#e3e6ec"/><rect x="158.00" y="2" width="1" height="612.50" fill="#e3e6ec"/><rect x="236.75" y="2" width="1" height="612.50" fill="#e3e6ec"/><rect x="315.50" y="2" width="1" height="612.50" fill="#e3e6ec"/><rect x="394.25" y="2" width="1" height="612.50" fill="#e3e6ec"/><rect x="473.00" y="2" width="1" height="612.50" fill="#e3e6ec"/><rect x="551.75" y="2" width="1" height="612.50" fill="#e3e6ec"/><rect x="17.52" y="28.22" width="45.70" height="586.28" fill="#1fc33c"/><rect x="17.52" y="28.03" width="45.70" height="0.18" fill="#b262b4"/><rect x="17.52" y="2.00" width="45.70" height="26.03" fill="#ed2f29"/><rect x="17.52" y="27.72" width="45.70" height="1" fill="#fff" fill-opacity=".85"/><rect x="96.27" y="105.39" width="45.70" height="509.11" fill="#1fc33c"/><rect x="96.27" y="105.08" width="45.70" height="0.31" fill="#b262b4"/><rect x="96.27" y="2.00" width="45.70" height="103.08" fill="#ed2f29"/><rect x="96.27" y="104.89" width="45.70" height="1" fill="#fff" fill-opacity=".85"/><rect x="175.02" y="69.80" width="45.70" height="544.70" fill="#1fc33c"/><rect x="175.02" y="69.62" width="45.70" height="0.18" fill="#b262b4"/><rect x="175.02" y="2.00" width="45.70" height="67.62" fill="#ed2f29"/><rect x="175.02" y="69.30" width="45.70" height="1" fill="#fff" fill-opacity=".85"/><rect x="253.77" y="41.14" width="45.70" height="573.36" fill="#1fc33c"/><rect x="253.77" y="41.08" width="45.70" height="0.06" fill="#b262b4"/><rect x="253.77" y="2.00" width="45.70" height="39.08" fill="#ed2f29"/><rect x="253.77" y="40.64" width="45.70" height="1" fill="#fff" fill-opacity=".85"/><rect x="332.53" y="36.18" width="45.70" height="578.32" fill="#1fc33c"/><rect x="332.53" y="22.46" width="45.70" height="13.72" fill="#b262b4"/><rect x="332.53" y="2.00" width="45.70" height="20.46" fill="#ed2f29"/><rect x="332.53" y="35.68" width="45.70" height="1" fill="#fff" fill-opacity=".85"/><rect x="332.53" y="21.96" width="45.70" height="1" fill="#fff" fill-opacity=".7"/><rect x="411.28" y="44.08" width="45.70" height="570.42" fill="#1fc33c"/><rect x="411.28" y="40.77" width="45.70" height="3.31" fill="#b262b4"/><rect x="411.28" y="2.00" width="45.70" height="38.77" fill="#ed2f29"/><rect x="411.28" y="43.58" width="45.70" height="1" fill="#fff" fill-opacity=".85"/><rect x="411.28" y="40.27" width="45.70" height="1" fill="#fff" fill-opacity=".7"/><rect x="490.03" y="2.00" width="45.70" height="612.50" fill="#1fc33c"/><rect x="568.78" y="2.00" width="45.70" height="612.50" fill="#1fc33c"/><rect x="1" y="614.20" width="630.00" height="1.200" fill="#9b9b9b"/></svg>
<span class="t" style="left:698.48px;top:1569.54px;font-size:12.6px;color:#666666;">0.00</span>
<span class="t" style="left:691.47px;top:1447.04px;font-size:12.6px;color:#666666;">20.00</span>
<span class="t" style="left:691.47px;top:1324.54px;font-size:12.6px;color:#666666;">40.00</span>
<span class="t" style="left:691.47px;top:1202.04px;font-size:12.6px;color:#666666;">60.00</span>
<span class="t" style="left:691.47px;top:1079.54px;font-size:12.6px;color:#666666;">80.00</span>
<span class="t" style="left:684.46px;top:957.04px;font-size:12.6px;color:#666666;">100.00</span>
<span class="t" style="left:762.11px;top:970.04px;font-size:12.6px;color:#000;">4.25</span>
<span class="t" style="left:758.61px;top:996.76px;font-size:12.6px;color:#000;">95.72</span>
<span class="t" style="left:837.36px;top:970.04px;font-size:12.6px;color:#000;">16.83</span>
<span class="t" style="left:837.36px;top:1073.93px;font-size:12.6px;color:#000;">83.12</span>
<span class="t" style="left:916.58px;top:970.04px;font-size:12.6px;color:#000;">11.04</span>
<span class="t" style="left:916.11px;top:1038.35px;font-size:12.6px;color:#000;">88.93</span>
<span class="t" style="left:998.36px;top:970.04px;font-size:12.6px;color:#000;">6.38</span>
<span class="t" style="left:994.86px;top:1009.68px;font-size:12.6px;color:#000;">93.61</span>
<span class="t" style="left:1077.11px;top:970.04px;font-size:12.6px;color:#000;">3.34</span>
<span class="t" style="left:1073.61px;top:1004.72px;font-size:12.6px;color:#000;">94.42</span>
<span class="t" style="left:1155.86px;top:970.04px;font-size:12.6px;color:#000;">6.33</span>
<span class="t" style="left:1152.36px;top:1012.62px;font-size:12.6px;color:#000;">93.13</span>
<span class="t" style="left:1227.61px;top:970.04px;font-size:12.6px;color:#000;">100.00</span>
<span class="t" style="left:1306.36px;top:970.04px;font-size:12.6px;color:#000;">100.00</span>
<span class="t" style="left:759.61px;top:1592.29px;font-size:12.3px;color:#666666;letter-spacing:-0.34px;">BAY1</span>
<span class="t" style="left:838.13px;top:1592.29px;font-size:12.3px;color:#666666;letter-spacing:-0.19px;">BAY2</span>
<span class="t" style="left:916.88px;top:1592.29px;font-size:12.3px;color:#666666;letter-spacing:-0.19px;">BAY3</span>
<span class="t" style="left:995.63px;top:1592.29px;font-size:12.3px;color:#666666;letter-spacing:-0.19px;">BAY4</span>
<span class="t" style="left:1074.38px;top:1592.29px;font-size:12.3px;color:#666666;letter-spacing:-0.19px;">BAY5</span>
<span class="t" style="left:1153.13px;top:1592.29px;font-size:12.3px;color:#666666;letter-spacing:-0.19px;">BAY6</span>
<span class="t" style="left:1222.38px;top:1592.15px;font-size:12.6px;color:#666666;">Facilities</span>
<span class="t" style="left:1296.53px;top:1591.85px;font-size:13.2px;color:#666666;letter-spacing:0.21px;">Shopfloor</span>
<span class="t" style="left:995.28px;top:1617.57px;font-size:14.4px;color:#666666;letter-spacing:0.57px;">Equipment Area</span>
<span class="t" style="left:665.7px;top:1270px;font-size:13.6px;color:#666666;line-height:1;transform:translate(-50%,-50%) rotate(-90deg);letter-spacing:.5px;">% Time</span>
<div class="b" style="left:877px;top:1651px;width:11px;height:11px;background:#1fc33c;"></div>
<span class="t" style="left:895.8px;top:1652.49px;font-size:12.3px;color:#1a1a1a;letter-spacing:-0.29px;">PROD_ENG</span>
<div class="b" style="left:975px;top:1651px;width:11px;height:11px;background:#b262b4;"></div>
<span class="t" style="left:994.2px;top:1652.49px;font-size:12.3px;color:#1a1a1a;letter-spacing:-0.03px;">SCHED_DOWN</span>
<div class="b" style="left:1095px;top:1651px;width:11px;height:11px;background:#ed2f29;"></div>
<span class="t" style="left:1114.4px;top:1652.41px;font-size:12.47px;color:#1a1a1a;">UNSCHED_DOWN</span>
<div class="b" style="left:1857px;top:872.8px;width:1213px;height:823.5px;background:#fff;border:1px solid #e2e2e2;border-radius:3px;box-sizing:border-box;box-shadow:0 2px 4px rgba(0,0,0,.05);"></div>
<div class="b" style="left:1858px;top:927.5px;width:1211px;height:1px;background:#e8e8e8;"></div>
<svg class="b" style="left:1875px;top:892.3px;" width="18.5" height="18.5" viewBox="0 0 16 16"><g fill="none" stroke="#3a3a3a" stroke-width="1.1" stroke-linecap="round" stroke-linejoin="round"><path d="M.5 14.500h15M1.800 14.500V7.500h2.400v7M6.400 14.500V2.500h2.600v12M11.500 14.500V9.300h2.400v5.200M4.200 14.500h2.200M9 14.500h2.500"/></g></svg>
<span class="t" style="left:1903.1px;top:893.27px;font-size:17.04px;color:#262626;font-weight:700;">Equipment Availability for BAY5</span>
<svg class="b" style="left:3025.5px;top:891.3px;" width="18" height="18" viewBox="0 0 16 16"><g fill="none" stroke="#333" stroke-width="1.1" stroke-linecap="round" stroke-linejoin="round"><path d="M9.400 6.600 14.500 1.500M10.200 1.500h4.300v4.300M6.600 9.400 1.500 14.500M5.800 14.500H1.500v-4.300"/></g></svg>
<svg class="b" style="left:1965.3px;top:961.3px" width="622.7" height="562.9"><rect x="1" y="503.61" width="620.70" height="1" fill="#eef0f4"/><rect x="1" y="447.82" width="620.70" height="1" fill="#e3e6ec"/><rect x="1" y="392.03" width="620.70" height="1" fill="#eef0f4"/><rect x="1" y="336.24" width="620.70" height="1" fill="#e3e6ec"/><rect x="1" y="280.45" width="620.70" height="1" fill="#eef0f4"/><rect x="1" y="224.66" width="620.70" height="1" fill="#e3e6ec"/><rect x="1" y="168.87" width="620.70" height="1" fill="#eef0f4"/><rect x="1" y="113.08" width="620.70" height="1" fill="#e3e6ec"/><rect x="1" y="57.29" width="620.70" height="1" fill="#eef0f4"/><rect x="1" y="1.50" width="620.70" height="1" fill="#e3e6ec"/><rect x="34.98" y="2" width="1" height="557.90" fill="#e3e6ec"/><rect x="69.47" y="2" width="1" height="557.90" fill="#e3e6ec"/><rect x="103.95" y="2" width="1" height="557.90" fill="#e3e6ec"/><rect x="138.43" y="2" width="1" height="557.90" fill="#e3e6ec"/><rect x="172.92" y="2" width="1" height="557.90" fill="#e3e6ec"/><rect x="207.40" y="2" width="1" height="557.90" fill="#e3e6ec"/><rect x="241.88" y="2" width="1" height="557.90" fill="#e3e6ec"/><rect x="276.37" y="2" width="1" height="557.90" fill="#e3e6ec"/><rect x="310.85" y="2" width="1" height="557.90" fill="#e3e6ec"/><rect x="345.33" y="2" width="1" height="557.90" fill="#e3e6ec"/><rect x="379.82" y="2" width="1" height="557.90" fill="#e3e6ec"/><rect x="414.30" y="2" width="1" height="557.90" fill="#e3e6ec"/><rect x="448.78" y="2" width="1" height="557.90" fill="#e3e6ec"/><rect x="483.27" y="2" width="1" height="557.90" fill="#e3e6ec"/><rect x="517.75" y="2" width="1" height="557.90" fill="#e3e6ec"/><rect x="552.23" y="2" width="1" height="557.90" fill="#e3e6ec"/><rect x="586.72" y="2" width="1" height="557.90" fill="#e3e6ec"/><rect x="8.14" y="24.87" width="20.20" height="535.03" fill="#1fc33c"/><rect x="8.14" y="22.08" width="20.20" height="2.79" fill="#b262b4"/><rect x="8.14" y="2.00" width="20.20" height="20.08" fill="#ed2f29"/><rect x="8.14" y="24.37" width="20.20" height="1" fill="#fff" fill-opacity=".85"/><rect x="8.14" y="21.58" width="20.20" height="1" fill="#fff" fill-opacity=".7"/><rect x="42.62" y="14.27" width="20.20" height="545.63" fill="#1fc33c"/><rect x="42.62" y="11.48" width="20.20" height="2.79" fill="#b262b4"/><rect x="42.62" y="2.00" width="20.20" height="9.48" fill="#ed2f29"/><rect x="42.62" y="13.77" width="20.20" height="1" fill="#fff" fill-opacity=".85"/><rect x="42.62" y="10.98" width="20.20" height="1" fill="#fff" fill-opacity=".7"/><rect x="77.11" y="10.93" width="20.20" height="548.97" fill="#1fc33c"/><rect x="77.11" y="8.92" width="20.20" height="2.01" fill="#b262b4"/><rect x="77.11" y="2.00" width="20.20" height="6.92" fill="#ed2f29"/><rect x="77.11" y="10.43" width="20.20" height="1" fill="#fff" fill-opacity=".85"/><rect x="77.11" y="8.42" width="20.20" height="1" fill="#fff" fill-opacity=".7"/><rect x="111.59" y="24.32" width="20.20" height="535.58" fill="#1fc33c"/><rect x="111.59" y="20.24" width="20.20" height="4.07" fill="#b262b4"/><rect x="111.59" y="2.00" width="20.20" height="18.24" fill="#ed2f29"/><rect x="111.59" y="23.82" width="20.20" height="1" fill="#fff" fill-opacity=".85"/><rect x="111.59" y="19.74" width="20.20" height="1" fill="#fff" fill-opacity=".7"/><rect x="146.08" y="202.84" width="20.20" height="357.06" fill="#1fc33c"/><rect x="146.08" y="6.74" width="20.20" height="196.10" fill="#b262b4"/><rect x="146.08" y="2.00" width="20.20" height="4.74" fill="#ed2f29"/><rect x="146.08" y="202.34" width="20.20" height="1" fill="#fff" fill-opacity=".85"/><rect x="146.08" y="6.24" width="20.20" height="1" fill="#fff" fill-opacity=".7"/><rect x="180.56" y="18.40" width="20.20" height="541.50" fill="#1fc33c"/><rect x="180.56" y="14.61" width="20.20" height="3.79" fill="#b262b4"/><rect x="180.56" y="2.00" width="20.20" height="12.61" fill="#ed2f29"/><rect x="180.56" y="17.90" width="20.20" height="1" fill="#fff" fill-opacity=".85"/><rect x="180.56" y="14.11" width="20.20" height="1" fill="#fff" fill-opacity=".7"/><rect x="215.04" y="215.12" width="20.20" height="344.78" fill="#1fc33c"/><rect x="215.04" y="212.33" width="20.20" height="2.79" fill="#b262b4"/><rect x="215.04" y="2.00" width="20.20" height="210.33" fill="#ed2f29"/><rect x="215.04" y="214.62" width="20.20" height="1" fill="#fff" fill-opacity=".85"/><rect x="215.04" y="211.83" width="20.20" height="1" fill="#fff" fill-opacity=".7"/><rect x="249.53" y="9.53" width="20.20" height="550.37" fill="#1fc33c"/><rect x="249.53" y="6.74" width="20.20" height="2.79" fill="#b262b4"/><rect x="249.53" y="2.00" width="20.20" height="4.74" fill="#ed2f29"/><rect x="249.53" y="9.03" width="20.20" height="1" fill="#fff" fill-opacity=".85"/><rect x="249.53" y="6.24" width="20.20" height="1" fill="#fff" fill-opacity=".7"/><rect x="284.01" y="11.15" width="20.20" height="548.75" fill="#1fc33c"/><rect x="284.01" y="7.97" width="20.20" height="3.18" fill="#b262b4"/><rect x="284.01" y="2.00" width="20.20" height="5.97" fill="#ed2f29"/><rect x="284.01" y="10.65" width="20.20" height="1" fill="#fff" fill-opacity=".85"/><rect x="284.01" y="7.47" width="20.20" height="1" fill="#fff" fill-opacity=".7"/><rect x="318.49" y="13.16" width="20.20" height="546.74" fill="#1fc33c"/><rect x="318.49" y="10.81" width="20.20" height="2.34" fill="#b262b4"/><rect x="318.49" y="2.00" width="20.20" height="8.81" fill="#ed2f29"/><rect x="318.49" y="12.66" width="20.20" height="1" fill="#fff" fill-opacity=".85"/><rect x="318.49" y="10.31" width="20.20" height="1" fill="#fff" fill-opacity=".7"/><rect x="352.98" y="12.60" width="20.20" height="547.30" fill="#1fc33c"/><rect x="352.98" y="9.87" width="20.20" height="2.73" fill="#b262b4"/><rect x="352.98" y="2.00" width="20.20" height="7.87" fill="#ed2f29"/><rect x="352.98" y="12.10" width="20.20" height="1" fill="#fff" fill-opacity=".85"/><rect x="352.98" y="9.37" width="20.20" height="1" fill="#fff" fill-opacity=".7"/><rect x="387.46" y="7.58" width="20.20" height="552.32" fill="#1fc33c"/><rect x="387.46" y="5.46" width="20.20" height="2.12" fill="#b262b4"/><rect x="387.46" y="2.00" width="20.20" height="3.46" fill="#ed2f29"/><rect x="387.46" y="7.08" width="20.20" height="1" fill="#fff" fill-opacity=".85"/><rect x="387.46" y="4.96" width="20.20" height="1" fill="#fff" fill-opacity=".7"/><rect x="421.94" y="5.91" width="20.20" height="553.99" fill="#1fc33c"/><rect x="421.94" y="4.79" width="20.20" height="1.12" fill="#b262b4"/><rect x="421.94" y="2.00" width="20.20" height="2.79" fill="#ed2f29"/><rect x="421.94" y="5.41" width="20.20" height="1" fill="#fff" fill-opacity=".85"/><rect x="421.94" y="4.29" width="20.20" height="1" fill="#fff" fill-opacity=".7"/><rect x="456.42" y="10.37" width="20.20" height="549.53" fill="#1fc33c"/><rect x="456.42" y="8.69" width="20.20" height="1.67" fill="#b262b4"/><rect x="456.42" y="2.00" width="20.20" height="6.69" fill="#ed2f29"/><rect x="456.42" y="9.87" width="20.20" height="1" fill="#fff" fill-opacity=".85"/><rect x="456.42" y="8.19" width="20.20" height="1" fill="#fff" fill-opacity=".7"/><rect x="490.91" y="5.46" width="20.20" height="554.44" fill="#1fc33c"/><rect x="490.91" y="3.23" width="20.20" height="2.23" fill="#b262b4"/><rect x="490.91" y="2.00" width="20.20" height="1.23" fill="#ed2f29"/><rect x="490.91" y="4.96" width="20.20" height="1" fill="#fff" fill-opacity=".85"/><rect x="490.91" y="2.73" width="20.20" height="1" fill="#fff" fill-opacity=".7"/><rect x="525.39" y="7.58" width="20.20" height="552.32" fill="#1fc33c"/><rect x="525.39" y="2.00" width="20.20" height="5.58" fill="#ed2f29"/><rect x="525.39" y="7.08" width="20.20" height="1" fill="#fff" fill-opacity=".85"/><rect x="559.88" y="3.67" width="20.20" height="556.23" fill="#1fc33c"/><rect x="559.88" y="3.12" width="20.20" height="0.56" fill="#b262b4"/><rect x="559.88" y="2.00" width="20.20" height="1.12" fill="#ed2f29"/><rect x="559.88" y="3.17" width="20.20" height="1" fill="#fff" fill-opacity=".85"/><rect x="594.36" y="4.23" width="20.20" height="555.67" fill="#1fc33c"/><rect x="594.36" y="3.56" width="20.20" height="0.67" fill="#b262b4"/><rect x="594.36" y="2.00" width="20.20" height="1.56" fill="#ed2f29"/><rect x="594.36" y="3.73" width="20.20" height="1" fill="#fff" fill-opacity=".85"/><rect x="1" y="559.60" width="620.70" height="1.200" fill="#9b9b9b"/></svg>
<span class="t" style="left:1929.88px;top:1514.74px;font-size:12.6px;color:#666666;">0.00</span>
<span class="t" style="left:1922.87px;top:1403.16px;font-size:12.6px;color:#666666;">20.00</span>
<span class="t" style="left:1922.87px;top:1291.58px;font-size:12.6px;color:#666666;">40.00</span>
<span class="t" style="left:1922.87px;top:1180px;font-size:12.6px;color:#666666;">60.00</span>
<span class="t" style="left:1922.87px;top:1068.42px;font-size:12.6px;color:#666666;">80.00</span>
<span class="t" style="left:1915.86px;top:956.84px;font-size:12.6px;color:#666666;">100.00</span>
<span class="t" style="left:1983.04px;top:1533px;font-size:12.6px;color:#666666;line-height:1;letter-spacing:-0.21px;transform-origin:0 0;transform:rotate(-90deg) translate(-100%,-50%);">D_FANL_11</span>
<span class="t" style="left:2017.52px;top:1533px;font-size:12.6px;color:#666666;line-height:1;letter-spacing:-0.32px;transform-origin:0 0;transform:rotate(-90deg) translate(-100%,-50%);">D_FANL_13</span>
<span class="t" style="left:2052.01px;top:1533px;font-size:12.6px;color:#666666;line-height:1;letter-spacing:-0.32px;transform-origin:0 0;transform:rotate(-90deg) translate(-100%,-50%);">D_FANL_16</span>
<span class="t" style="left:2086.49px;top:1533px;font-size:12.6px;color:#666666;line-height:1;letter-spacing:-0.5px;transform-origin:0 0;transform:rotate(-90deg) translate(-100%,-50%);">D_FOX_10</span>
<span class="t" style="left:2120.97px;top:1533px;font-size:12.6px;color:#666666;line-height:1;letter-spacing:-0.5px;transform-origin:0 0;transform:rotate(-90deg) translate(-100%,-50%);">D_FOX_12</span>
<span class="t" style="left:2155.46px;top:1533px;font-size:12.6px;color:#666666;line-height:1;letter-spacing:-0.5px;transform-origin:0 0;transform:rotate(-90deg) translate(-100%,-50%);">D_FOX_13</span>
<span class="t" style="left:2189.94px;top:1533px;font-size:12.6px;color:#666666;line-height:1;letter-spacing:-0.5px;transform-origin:0 0;transform:rotate(-90deg) translate(-100%,-50%);">D_FOX_14</span>
<span class="t" style="left:2224.43px;top:1533px;font-size:12.6px;color:#666666;line-height:1;letter-spacing:-0.5px;transform-origin:0 0;transform:rotate(-90deg) translate(-100%,-50%);">D_FOX_16</span>
<span class="t" style="left:2258.91px;top:1533px;font-size:12.6px;color:#666666;line-height:1;letter-spacing:-0.5px;transform-origin:0 0;transform:rotate(-90deg) translate(-100%,-50%);">D_FOX_19</span>
<span class="t" style="left:2293.39px;top:1533px;font-size:12.6px;color:#666666;line-height:1;letter-spacing:-0.5px;transform-origin:0 0;transform:rotate(-90deg) translate(-100%,-50%);">D_FOX_24</span>
<span class="t" style="left:2327.88px;top:1533px;font-size:12.6px;color:#666666;line-height:1;letter-spacing:-0.5px;transform-origin:0 0;transform:rotate(-90deg) translate(-100%,-50%);">D_FPOL_11</span>
<span class="t" style="left:2362.36px;top:1533px;font-size:12.6px;color:#666666;line-height:1;letter-spacing:-0.6px;transform-origin:0 0;transform:rotate(-90deg) translate(-100%,-50%);">D_FPOL_13</span>
<span class="t" style="left:2396.84px;top:1533px;font-size:12.6px;color:#666666;line-height:1;letter-spacing:-0.6px;transform-origin:0 0;transform:rotate(-90deg) translate(-100%,-50%);">D_FPOL_14</span>
<span class="t" style="left:2431.32px;top:1533px;font-size:12.6px;color:#666666;line-height:1;letter-spacing:-0.19px;transform-origin:0 0;transform:rotate(-90deg) translate(-100%,-50%);">D_INTHK_10</span>
<span class="t" style="left:2465.81px;top:1533px;font-size:12.6px;color:#666666;line-height:1;letter-spacing:-0.1px;transform-origin:0 0;transform:rotate(-90deg) translate(-100%,-50%);">D_INTHK_11</span>
<span class="t" style="left:2500.29px;top:1533px;font-size:12.6px;color:#666666;line-height:1;letter-spacing:-0.19px;transform-origin:0 0;transform:rotate(-90deg) translate(-100%,-50%);">D_INTHK_12</span>
<span class="t" style="left:2534.78px;top:1533px;font-size:12.6px;color:#666666;line-height:1;letter-spacing:-0.57px;transform-origin:0 0;transform:rotate(-90deg) translate(-100%,-50%);">D_WET_10</span>
<span class="t" style="left:2569.26px;top:1533px;font-size:12.6px;color:#666666;line-height:1;letter-spacing:-0.45px;transform-origin:0 0;transform:rotate(-90deg) translate(-100%,-50%);">D_WET_11</span>
<span class="t" style="left:2244.06px;top:1617.57px;font-size:14.4px;color:#666666;letter-spacing:0.63px;">Equipment</span>
<span class="t" style="left:1896.7px;top:1242px;font-size:13.6px;color:#666666;line-height:1;transform:translate(-50%,-50%) rotate(-90deg);letter-spacing:.5px;">% Time</span>
<div class="b" style="left:2103px;top:1651px;width:11px;height:11px;background:#1fc33c;"></div>
<span class="t" style="left:2122.7px;top:1652.49px;font-size:12.3px;color:#1a1a1a;letter-spacing:-0.32px;">PROD_ENG</span>
<div class="b" style="left:2201px;top:1651px;width:11px;height:11px;background:#b262b4;"></div>
<span class="t" style="left:2220.5px;top:1652.49px;font-size:12.3px;color:#1a1a1a;letter-spacing:-0.03px;">SCHED_DOWN</span>
<div class="b" style="left:2321px;top:1651px;width:11px;height:11px;background:#ed2f29;"></div>
<span class="t" style="left:2341.3px;top:1652.44px;font-size:12.4px;color:#1a1a1a;">UNSCHED_DOWN</span>
<div class="b" style="left:0px;top:0px;width:3075px;height:54px;background:#7194b7;box-shadow:0 1px 2px rgba(0,0,0,.18);z-index:5;"></div>
<div class="b" style="left:0px;top:0px;width:3075px;height:1px;background:#86a3c1;z-index:6;"></div>
<div class="b" style="left:0px;top:0px;width:1px;height:54px;background:#86a3c1;z-index:6;"></div>
<svg class="b" style="left:0;top:0;z-index:8" width="9" height="9" viewBox="0 0 9 9"><path d="M0 0H8.500A8 8 0 0 0 0 8.500z" fill="#f6f6f6"/></svg>
<div class="b" style="left:9px;top:9px;width:36px;height:36px;background:#5e7e9e;border-radius:4px;z-index:6;"></div>
<div class="b" style="left:17.8px;top:19.3px;width:12.4px;height:2.6px;background:#fff;border-radius:1.300px;z-index:7;"></div>
<div class="b" style="left:17.8px;top:25.5px;width:18.4px;height:2.6px;background:#fff;border-radius:1.300px;z-index:7;"></div>
<div class="b" style="left:17.8px;top:31.6px;width:9px;height:2.6px;background:#fff;border-radius:1.300px;z-index:7;"></div>
<div class="b" style="left:54px;top:9px;width:191px;height:36px;z-index:6;border-radius:2px;background:linear-gradient(100deg,#14317f 0%,#1c3f8f 45%,#2a68ad 100%);"></div>
<div class="b" style="left:58px;top:13px;width:183px;height:28px;z-index:6;background:linear-gradient(100deg,#e4e4ea 0%,#f4f4f8 45%,#ffffff 100%);"></div>
<div class="t logo" style="left:72px;top:16.200px;z-index:7;"><span class="L">T</span>OOL<span class="L">T</span>RACK</div>
<span class="t" style="left:219.500px;top:19.500px;font-size:5.500px;font-weight:700;color:#2a69ad;transform:scaleX(1.400);transform-origin:0 50%;z-index:7;">&#8482;</span>
<div class="b" style="left:2832px;top:9px;width:112px;height:36px;background:#fec627;border-radius:4px;z-index:6;"></div>
<svg class="b" style="left:2845.3px;top:17.8px;z-index:7;" width="18.5" height="18.5" viewBox="0 0 16 16"><g fill="none" stroke="#111" stroke-width="1.25" stroke-linecap="round" stroke-linejoin="round"><path d="M6.200 14.500H3.300a1.200 1.200 0 0 1-1.200-1.200V4a1.200 1.200 0 0 1 1.200-1.200h1.500M10.300 2.800h1.500A1.200 1.200 0 0 1 13 4v3.800M4.800 1.600h5.500v2.600H4.800zM6.300 1.600a1.250 1.250 0 0 1 2.500 0"/><path d="M8.600 15l.5-1.900 4.300-4.300a.95.95 0 0 1 1.350 0l.1.100a.95.95 0 0 1 0 1.350l-4.300 4.300z"/></g></svg>
<span class="t" style="left:2870.5px;top:21.53px;font-size:13.65px;color:#000;font-weight:700;z-index:7;">My Notes</span>
<svg class="b" style="left:2962.8px;top:18.3px;z-index:7;" width="16.6" height="16.6" viewBox="0 0 16 16"><g fill="none" stroke="#fff" stroke-width="1.5" stroke-linecap="round" stroke-linejoin="round"><circle cx="8" cy="5.300" r="3.900"/><path d="M1.500 15.300v-1c0-2.600 2-4.300 4.300-4.800M14.500 15.300v-1c0-2.600-2-4.300-4.300-4.800"/></g></svg>
<span class="t" style="left:2988px;top:21.8px;font-size:13.3px;color:#fff;letter-spacing:-0.35px;z-index:7;">ICHIZMAR</span>
<svg class="b" style="left:3054px;top:19.8px;z-index:7;" width="14" height="14" viewBox="0 0 16 16"><g fill="none" stroke="#fff" stroke-width="1.6" stroke-linecap="round" stroke-linejoin="round"><path d="M2.500 5.500 8 11l5.500-5.500"/></g></svg>
</div>
</body></html>
